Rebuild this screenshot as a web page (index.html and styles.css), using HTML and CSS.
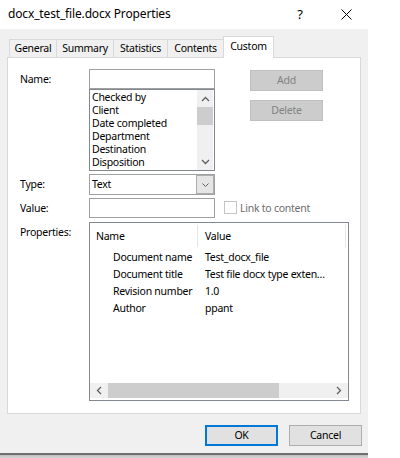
FILE: index.html
```html
<!DOCTYPE html>
<html>
<head>
<meta charset="utf-8">
<link rel="stylesheet" href="styles.css">
</head>
<body>
<div class="window">
  <div class="titlebar">
    <span class="title">docx_test_file.docx Properties</span>
    <span class="help">?</span>
    <svg class="close" width="11" height="11" viewBox="0 0 11 11"><path d="M0.5 0.5L10.5 10.5M10.5 0.5L0.5 10.5" stroke="#000" stroke-width="1" fill="none"/></svg>
  </div>
  <div class="body">
    <div class="tabs">
      <div class="tab t-general">General</div>
      <div class="tab t-summary">Summary</div>
      <div class="tab t-stats">Statistics</div>
      <div class="tab t-contents">Contents</div>
      <div class="tab t-custom active">Custom</div>
    </div>
    <div class="panel">
      <div class="row name-row">
        <div class="lbl">Name:</div>
        <div class="namecol">
          <div class="input"></div>
          <div class="listbox">
            <div class="items">
              <div>Checked by</div>
              <div>Client</div>
              <div>Date completed</div>
              <div>Department</div>
              <div>Destination</div>
              <div>Disposition</div>
            </div>
            <div class="vscroll">
              <div class="arrow-v"><svg width="9" height="6" viewBox="0 0 9 6"><path d="M1 5L4.5 1.5L8 5" stroke="#606060" stroke-width="1.3" fill="none"/></svg></div>
              <div class="vthumb"></div>
              <div class="vspace"></div>
              <div class="arrow-v"><svg width="9" height="6" viewBox="0 0 9 6"><path d="M1 1L4.5 4.5L8 1" stroke="#606060" stroke-width="1.3" fill="none"/></svg></div>
            </div>
          </div>
        </div>
        <div class="btncol">
          <div class="dbtn btn-add">Add</div>
          <div class="dbtn btn-del">Delete</div>
        </div>
      </div>
      <div class="row type-row">
        <div class="lbl">Type:</div>
        <div class="combo">
          <span class="combo-text">Text</span>
          <div class="combo-btn"><svg width="9" height="6" viewBox="0 0 9 6"><path d="M1.5 1.5L4.5 4.5L7.5 1.5" stroke="#606060" stroke-width="1" fill="none"/></svg></div>
        </div>
      </div>
      <div class="row value-row">
        <div class="lbl">Value:</div>
        <div class="input"></div>
        <div class="checkbox"></div>
        <span class="check-label">Link to content</span>
      </div>
      <div class="row props-row">
        <div class="lbl">Properties:</div>
        <div class="listview">
          <div class="lv-header">
            <div class="lv-hname">Name</div>
            <div class="lv-sep"></div>
            <div class="lv-hvalue">Value</div>
            <div class="lv-sep"></div>
          </div>
          <div class="lv-row"><div class="c-name">Document name</div><div class="c-value">Test_docx_file</div></div>
          <div class="lv-row"><div class="c-name">Document title</div><div class="c-value">Test file docx type exten…</div></div>
          <div class="lv-row"><div class="c-name">Revision number</div><div class="c-value">1.0</div></div>
          <div class="lv-row"><div class="c-name">Author</div><div class="c-value">ppant</div></div>
          <div class="hscroll">
            <div class="arrow-h"><svg width="6" height="9" viewBox="0 0 6 9"><path d="M5 1L1.5 4.5L5 8" stroke="#606060" stroke-width="1.3" fill="none"/></svg></div>
            <div class="hthumb"></div>
            <div class="hspace"></div>
            <div class="arrow-h"><svg width="6" height="9" viewBox="0 0 6 9"><path d="M1 1L4.5 4.5L1 8" stroke="#606060" stroke-width="1.3" fill="none"/></svg></div>
          </div>
        </div>
      </div>
    </div>
    <div class="buttons">
      <div class="btn btn-ok">OK</div>
      <div class="btn btn-cancel">Cancel</div>
    </div>
  </div>
  <div class="bottombar"></div>
</div>
</body>
</html>
```
FILE: styles.css
```css
html, body {
  margin: 0;
  padding: 0;
  background: #ffffff;
}
body {
  font-family: "Noto Sans", "Open Sans", sans-serif;
  font-size: 10.5px;
  letter-spacing: -0.25px;
  color: #000;
  overflow: hidden;
}
.window {
  width: 368px;
}
.titlebar {
  height: 29px;
  display: flex;
  align-items: center;
  background: #fff;
}
.title {
  margin-left: 8px;
  font-size: 12px;
  letter-spacing: -0.15px;
  line-height: 18px;
  margin-top: -1px;
}
.help {
  margin-left: auto;
  width: 16px;
  text-align: center;
  font-size: 13px;
  line-height: 18px;
  margin-top: -1px;
}
.close {
  margin-left: 33px;
  margin-right: 16px;
  margin-top: -1px;
  display: block;
}
.body {
  background: #f0f0f0;
  height: 424px;
  padding-top: 7px;
  box-sizing: border-box;
}
.tabs {
  display: flex;
  align-items: flex-end;
  height: 21px;
  padding-left: 9px;
}
.tab {
  box-sizing: border-box;
  height: 18px;
  border: 1px solid #d9d9d9;
  border-bottom: none;
  background: #f0f0f0;
  text-align: center;
  line-height: 17px;
  margin-left: -1px;
}
.t-general { width: 48px; margin-left: 0; }
.t-summary { width: 58px; }
.t-stats { width: 55px; }
.t-contents { width: 57px; }
.t-custom { width: 51px; }
.tab.active {
  height: 22px;
  background: #fff;
  margin-bottom: -1px;
  position: relative;
  z-index: 1;
  line-height: 19px;
}
.panel {
  margin-left: 7px;
  width: 354px;
  height: 357px;
  box-sizing: border-box;
  border: 1px solid #d9d9d9;
  background: #fff;
  padding: 11px 0 0 12px;
}
.row {
  display: flex;
}
.lbl {
  width: 69px;
  flex: none;
  line-height: 20px;
}
.input {
  box-sizing: border-box;
  width: 126px;
  height: 20px;
  border: 1px solid #a0a0a0;
  background: #fff;
}
.listbox {
  box-sizing: border-box;
  width: 126px;
  height: 82px;
  border: 1px solid #828790;
  display: flex;
}
.items {
  flex: 1;
  padding: 1px 0 0 2px;
  line-height: 13px;
}
.vscroll {
  width: 16px;
  margin-right: 1px;
  background: #f0f0f0;
  display: flex;
  flex-direction: column;
}
.arrow-v {
  height: 17px;
  display: flex;
  align-items: center;
  justify-content: center;
}
.vthumb {
  height: 18px;
  background: #cdcdcd;
}
.vspace {
  flex: 1;
}
.btncol {
  margin-left: 35px;
  display: flex;
  flex-direction: column;
}
.dbtn {
  box-sizing: border-box;
  width: 73px;
  height: 21px;
  background: #cccccc;
  border: 1px solid #bfbfbf;
  color: #838383;
  text-align: center;
  line-height: 19px;
}
.btn-add { margin-top: 1px; }
.btn-del { margin-top: 9px; }
.type-row {
  margin-top: 3px;
}
.combo {
  box-sizing: border-box;
  width: 126px;
  height: 21px;
  border: 1px solid #a0a0a0;
  background: #fff;
  display: flex;
  justify-content: space-between;
}
.combo-text {
  padding-left: 2px;
  line-height: 19px;
}
.combo-btn {
  box-sizing: border-box;
  width: 18px;
  height: 19px;
  background: #e5e5e5;
  border: 1px solid #adadad;
  display: flex;
  align-items: center;
  justify-content: center;
}
.value-row {
  margin-top: 3px;
  align-items: center;
}
.checkbox {
  box-sizing: border-box;
  width: 13px;
  height: 13px;
  border: 1px solid #c4c4c4;
  background: #fff;
  margin-left: 9px;
  margin-top: -2px;
}
.check-label {
  margin-left: 3px;
  color: #6d6d6d;
  line-height: 20px;
}
.props-row {
  margin-top: 4px;
}
.listview {
  box-sizing: border-box;
  width: 260px;
  height: 179px;
  border: 1px solid #828790;
  display: flex;
  flex-direction: column;
  background: #fff;
}
.lv-header {
  height: 26px;
  display: flex;
  align-items: center;
  flex: none;
}
.lv-hname {
  width: 107px;
  padding-left: 6px;
  box-sizing: border-box;
  line-height: 26px;
}
.lv-hvalue {
  width: 147px;
  padding-left: 7px;
  box-sizing: border-box;
  line-height: 26px;
}
.lv-sep {
  width: 1px;
  height: 22px;
  background: #e5e5e5;
}
.lv-row {
  height: 17px;
  display: flex;
  line-height: 17px;
  white-space: nowrap;
  flex: none;
}
.c-name {
  width: 108px;
  padding-left: 23px;
  box-sizing: border-box;
}
.c-value {
  width: 148px;
  padding-left: 7px;
  box-sizing: border-box;
  overflow: hidden;
}
.hscroll {
  margin-top: auto;
  margin-bottom: 2px;
  height: 15px;
  background: #f0f0f0;
  display: flex;
  flex: none;
}
.arrow-h {
  width: 18px;
  display: flex;
  align-items: center;
  justify-content: center;
}
.hthumb {
  width: 171px;
  background: #cdcdcd;
}
.hspace {
  flex: 1;
}
.buttons {
  display: flex;
  justify-content: flex-end;
  gap: 11px;
  margin-top: 11px;
  padding-right: 6px;
}
.btn {
  box-sizing: border-box;
  width: 73px;
  height: 21px;
  background: #e1e1e1;
  border: 1px solid #adadad;
  text-align: center;
  line-height: 19px;
}
.btn-ok {
  border: 2px solid #0078d7;
  line-height: 17px;
}
.bottombar {
  height: 5px;
  background: linear-gradient(#6f6f6f 0, #6f6f6f 2px, #bdbdbd 2px, #d8d8d8 5px);
}
```
